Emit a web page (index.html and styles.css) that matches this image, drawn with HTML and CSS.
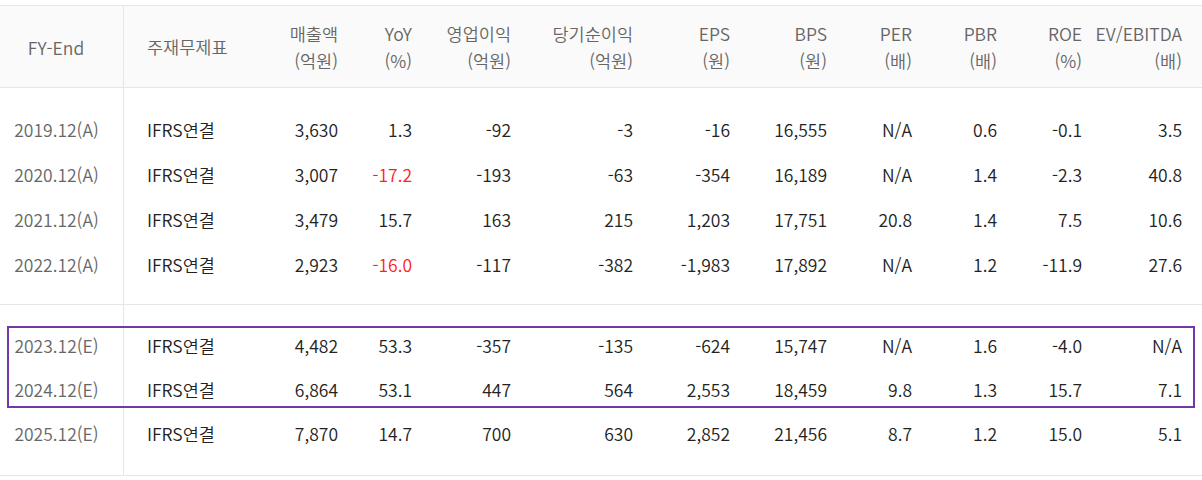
FILE: index.html
```html
<!DOCTYPE html>
<html lang="ko">
<head>
<meta charset="utf-8">
<title>재무제표</title>
<link rel="stylesheet" href="styles.css">
</head>
<body>
<div class="fin-table">
  <div class="row head">
    <div class="c c-fy">FY-End</div>
    <div class="c c-type">주재무제표</div>
    <div class="c num">매출액<br>(억원)</div>
    <div class="c num">YoY<br>(%)</div>
    <div class="c num">영업이익<br>(억원)</div>
    <div class="c num">당기순이익<br>(억원)</div>
    <div class="c num">EPS<br>(원)</div>
    <div class="c num">BPS<br>(원)</div>
    <div class="c num">PER<br>(배)</div>
    <div class="c num">PBR<br>(배)</div>
    <div class="c num">ROE<br>(%)</div>
    <div class="c num">EV/EBITDA<br>(배)</div>
  </div>

  <div class="section sec-actual">
    <div class="row data">
      <div class="c c-fy">2019.12(A)</div><div class="c c-type">IFRS연결</div>
      <div class="c num">3,630</div><div class="c num">1.3</div><div class="c num">-92</div><div class="c num">-3</div>
      <div class="c num">-16</div><div class="c num">16,555</div><div class="c num">N/A</div><div class="c num">0.6</div>
      <div class="c num">-0.1</div><div class="c num">3.5</div>
    </div>
    <div class="row data">
      <div class="c c-fy">2020.12(A)</div><div class="c c-type">IFRS연결</div>
      <div class="c num">3,007</div><div class="c num neg">-17.2</div><div class="c num">-193</div><div class="c num">-63</div>
      <div class="c num">-354</div><div class="c num">16,189</div><div class="c num">N/A</div><div class="c num">1.4</div>
      <div class="c num">-2.3</div><div class="c num">40.8</div>
    </div>
    <div class="row data">
      <div class="c c-fy">2021.12(A)</div><div class="c c-type">IFRS연결</div>
      <div class="c num">3,479</div><div class="c num">15.7</div><div class="c num">163</div><div class="c num">215</div>
      <div class="c num">1,203</div><div class="c num">17,751</div><div class="c num">20.8</div><div class="c num">1.4</div>
      <div class="c num">7.5</div><div class="c num">10.6</div>
    </div>
    <div class="row data">
      <div class="c c-fy">2022.12(A)</div><div class="c c-type">IFRS연결</div>
      <div class="c num">2,923</div><div class="c num neg">-16.0</div><div class="c num">-117</div><div class="c num">-382</div>
      <div class="c num">-1,983</div><div class="c num">17,892</div><div class="c num">N/A</div><div class="c num">1.2</div>
      <div class="c num">-11.9</div><div class="c num">27.6</div>
    </div>
  </div>

  <div class="section sec-est">
    <div class="highlight">
      <div class="row data est">
        <div class="c c-fy">2023.12(E)</div><div class="c c-type">IFRS연결</div>
        <div class="c num">4,482</div><div class="c num">53.3</div><div class="c num">-357</div><div class="c num">-135</div>
        <div class="c num">-624</div><div class="c num">15,747</div><div class="c num">N/A</div><div class="c num">1.6</div>
        <div class="c num">-4.0</div><div class="c num">N/A</div>
      </div>
      <div class="row data est">
        <div class="c c-fy">2024.12(E)</div><div class="c c-type">IFRS연결</div>
        <div class="c num">6,864</div><div class="c num">53.1</div><div class="c num">447</div><div class="c num">564</div>
        <div class="c num">2,553</div><div class="c num">18,459</div><div class="c num">9.8</div><div class="c num">1.3</div>
        <div class="c num">15.7</div><div class="c num">7.1</div>
      </div>
    </div>
    <div class="row data est">
      <div class="c c-fy">2025.12(E)</div><div class="c c-type">IFRS연결</div>
      <div class="c num">7,870</div><div class="c num">14.7</div><div class="c num">700</div><div class="c num">630</div>
      <div class="c num">2,852</div><div class="c num">21,456</div><div class="c num">8.7</div><div class="c num">1.2</div>
      <div class="c num">15.0</div><div class="c num">5.1</div>
    </div>
  </div>
</div>
</body>
</html>
```

FILE: styles.css
```css
html, body {
  margin: 0;
  padding: 0;
  background: #ffffff;
}

body {
  font-family: "Noto Sans CJK KR", "Noto Sans", sans-serif;
  font-size: 17.5px;
  font-weight: 350;
  color: #222222;
}

.fin-table {
  margin-top: 5px;
  width: 1202px;
  border-top: 1px solid #e6e6e6;
  /* continuous vertical divider after the FY-End column */
  background: linear-gradient(#e6e6e6, #e6e6e6) no-repeat 123px 0 / 1px 100%;
}

.row {
  display: grid;
  grid-template-columns: 124px 136px 78px 74px 99px 122px 97px 97px 85px 85px 85px 100px;
  padding-right: 20px;
  align-items: center;
}

.c {
  white-space: nowrap;
}

.num {
  text-align: right;
}

.c-fy {
  text-align: center;
  padding-right: 11px;
  color: #666666;
}

.c-type {
  padding-left: 23px;
}

.head {
  height: 81px;
  background: #fafafa;
  border-bottom: 1px solid #e6e6e6;
  color: #666666;
  line-height: 27px;
}

.head .c-fy {
  align-self: stretch;
  display: flex;
  align-items: center;
  justify-content: center;
  padding-top: 2px;
  border-right: 1px solid #e6e6e6;
}

.section {
  border-bottom: 1px solid #e6e6e6;
}

.sec-actual {
  padding: 20px 0 16px;
}

.sec-est {
  padding: 20px 0 18px;
}

.data {
  height: 45px;
  line-height: 43px;
  padding-bottom: 2px;
  box-sizing: border-box;
}

.data.est {
  height: 44px;
  line-height: 42px;
}

.neg {
  color: #ff2020;
}

.highlight {
  position: relative;
}

.highlight::after {
  content: "";
  position: absolute;
  left: 7px;
  top: 1px;
  width: 1188px;
  height: 82px;
  box-sizing: border-box;
  border: 2px solid #7436ac;
  pointer-events: none;
}
```
